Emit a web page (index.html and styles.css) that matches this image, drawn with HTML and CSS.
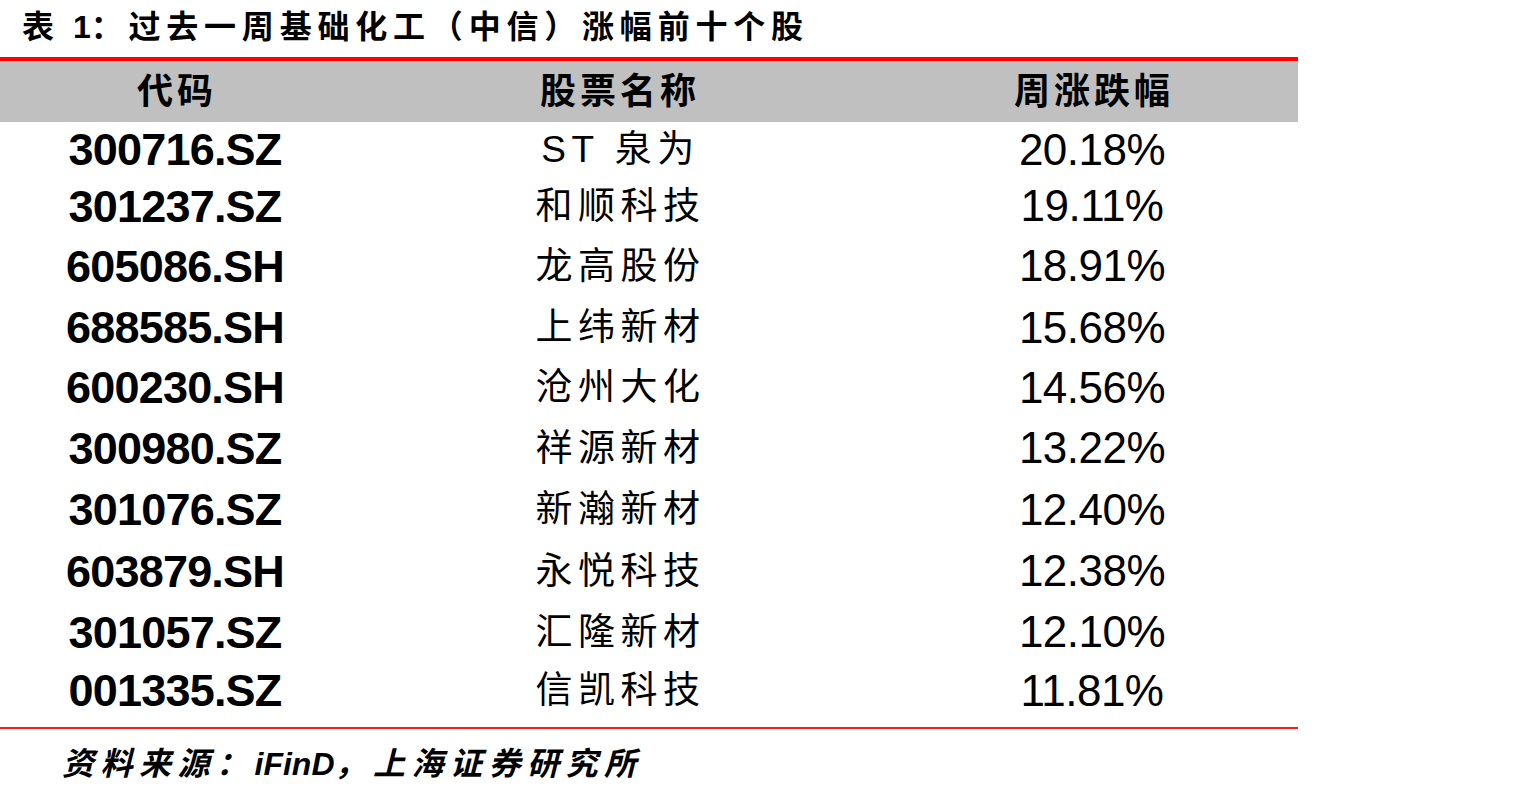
FILE: index.html
```html
<!DOCTYPE html>
<html lang="zh-CN">
<head>
<meta charset="utf-8">
<title>表 1：过去一周基础化工（中信）涨幅前十个股</title>
<link rel="stylesheet" href="styles.css">
</head>
<body>
<div class="page">
  <h1 class="title">表 <span class="num">1</span>：过去一周基础化工（中信）涨幅前十个股</h1>
  <div class="table">
    <div class="head">
      <div class="c1 hcell">代码</div>
      <div class="c2 hcell">股票名称</div>
      <div class="c3 hcell">周涨跌幅</div>
    </div>
    <div class="body">
      <div class="row r1"><div class="c1 code">300716.SZ</div><div class="c2 name">ST 泉为</div><div class="c3 pct">20.18%</div></div>
      <div class="row r2"><div class="c1 code">301237.SZ</div><div class="c2 name">和顺科技</div><div class="c3 pct">19.11%</div></div>
      <div class="row r3"><div class="c1 code">605086.SH</div><div class="c2 name">龙高股份</div><div class="c3 pct">18.91%</div></div>
      <div class="row r4"><div class="c1 code">688585.SH</div><div class="c2 name">上纬新材</div><div class="c3 pct">15.68%</div></div>
      <div class="row r5"><div class="c1 code">600230.SH</div><div class="c2 name">沧州大化</div><div class="c3 pct">14.56%</div></div>
      <div class="row r6"><div class="c1 code">300980.SZ</div><div class="c2 name">祥源新材</div><div class="c3 pct">13.22%</div></div>
      <div class="row r7"><div class="c1 code">301076.SZ</div><div class="c2 name">新瀚新材</div><div class="c3 pct">12.40%</div></div>
      <div class="row r8"><div class="c1 code">603879.SH</div><div class="c2 name">永悦科技</div><div class="c3 pct">12.38%</div></div>
      <div class="row r9"><div class="c1 code">301057.SZ</div><div class="c2 name">汇隆新材</div><div class="c3 pct">12.10%</div></div>
      <div class="row r10"><div class="c1 code">001335.SZ</div><div class="c2 name">信凯科技</div><div class="c3 pct">11.81%</div></div>
    </div>
  </div>
  <p class="source">资料来源：<span class="latin">iFinD</span>，上海证券研究所</p>
</div>
</body>
</html>
```

FILE: styles.css
```css
html, body {
  margin: 0;
  padding: 0;
  background: #ffffff;
}

body {
  color: #000000;
  font-family: "Liberation Sans", "Noto Sans CJK SC", sans-serif;
}

.page {
  width: 1535px;
}

.title {
  margin: 0;
  height: 57px;
  padding-left: 22px;
  font-family: "Noto Sans CJK SC", sans-serif;
  font-size: 32px;
  font-weight: 700;
  line-height: 48px;
  letter-spacing: 5.8px;
  white-space: nowrap;
}

.title .num {
  font-family: "Liberation Sans", sans-serif;
  letter-spacing: 0;
}

.table {
  width: 1298px;
  border-top: 4px solid #ff0000;
  border-bottom: 2px solid #ff1a1a;
}

.head {
  display: flex;
  align-items: center;
  height: 61px;
  padding-bottom: 8px;
  box-sizing: border-box;
  background: #c0c0c0;
}

.c1 { width: 350px; }
.c2 { width: 536px; }
.c3 { width: 412px; }

.c1, .c2, .c3 {
  text-align: center;
  white-space: nowrap;
}

.hcell {
  font-family: "Noto Sans CJK SC", sans-serif;
  font-size: 36px;
  font-weight: 700;
  line-height: 1;
  letter-spacing: 4px;
  padding-left: 4px;
  box-sizing: border-box;
}

.body {
  display: flex;
  flex-direction: column;
  padding-bottom: 8px;
}

.row {
  display: flex;
  align-items: center;
}

.r1 { height: 55px; }
.r2 { height: 58px; }
.r3 { height: 62px; }
.r4 { height: 61px; }
.r5 { height: 59px; }
.r6 { height: 62px; }
.r7 { height: 61px; }
.r8 { height: 62px; }
.r9 { height: 60px; }
.r10 { height: 57px; }

.code {
  font-family: "Liberation Sans", sans-serif;
  font-weight: 700;
  font-size: 45px;
  letter-spacing: -0.8px;
  line-height: 1;
}

.name {
  font-family: "Liberation Sans", "Noto Sans CJK SC", sans-serif;
  font-size: 37px;
  letter-spacing: 5.5px;
  padding-left: 5px;
  box-sizing: border-box;
  line-height: 1;
}

.pct {
  font-family: "Liberation Sans", sans-serif;
  font-size: 44px;
  letter-spacing: -0.5px;
  line-height: 1;
}

.source {
  margin: 0;
  height: 68px;
  padding-left: 62px;
  font-family: "Noto Sans CJK SC", sans-serif;
  font-size: 32px;
  font-weight: 700;
  font-style: italic;
  line-height: 64px;
  letter-spacing: 6.5px;
  white-space: nowrap;
}

.source .latin {
  font-family: "Liberation Sans", sans-serif;
  letter-spacing: 0;
}
```
